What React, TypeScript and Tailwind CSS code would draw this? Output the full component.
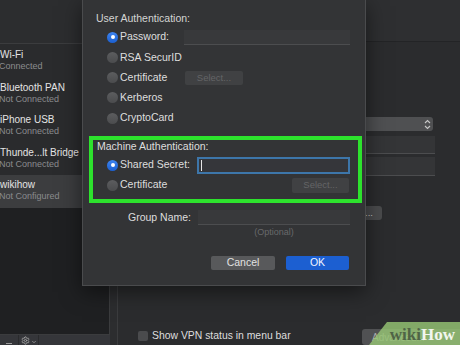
import { Settings, ChevronDown } from "lucide-react";

const networks = [
  { name: "Wi-Fi", status: "Connected" },
  { name: "Bluetooth PAN", status: "Not Connected" },
  { name: "iPhone USB", status: "Not Connected" },
  { name: "Thunde...lt Bridge", status: "Not Connected" },
  { name: "wikihow", status: "Not Configured", selected: true },
];

function Radio({ on = false }: { on?: boolean }) {
  if (on)
    return (
      <span className="w-[11px] h-[11px] rounded-full bg-gradient-to-b from-[#3d84f0] to-[#1b5fd0] flex items-center justify-center shrink-0">
        <span className="w-[4px] h-[4px] rounded-full bg-white" />
      </span>
    );
  return (
    <span className="w-[11px] h-[11px] rounded-full bg-gradient-to-b from-[#5c5d5f] to-[#4b4c4e] shrink-0" />
  );
}

function Field({ className = "" }: { className?: string }) {
  return (
    <div
      className={`bg-[#38393b] border-b border-[#4c4d4f] ${className}`}
    />
  );
}

function SelectButton({ className = "" }: { className?: string }) {
  return (
    <div
      className={`bg-[#404143] rounded-[2px] text-[9.5px] text-[#646567] flex items-center justify-center ${className}`}
    >
      Select...
    </div>
  );
}

export default function App() {
  return (
    <div className="relative w-[460px] h-[345px] overflow-hidden bg-[#2c2d2f] flex font-['Liberation_Sans',Arial,sans-serif] text-[10px]">
      {/* SIDEBAR */}
      <aside className="w-[110px] flex flex-col shrink-0">
        <div className="h-[43px]" />
        <div className="flex-1 flex flex-col border-t border-r border-b border-[#3b3c3e]">
          <div className="bg-[#2a2b2d] pt-[1px]">
            {networks.map((n) => (
              <div
                key={n.name}
                className={`h-[32.5px] pt-[4px] whitespace-nowrap ${n.selected ? "bg-[#3c3d3f]" : ""}`}
              >
                <div className="text-[10px] leading-[12px] text-[#e4e4e4]">
                  {n.name}
                </div>
                <div className="text-[9px] leading-[11px] text-[#8a8b8d] -ml-[1px]">
                  {n.status}
                </div>
              </div>
            ))}
          </div>
          <div className="flex-1 bg-[#1f2022]" />
        </div>
        <div className="h-[10px] flex bg-[#35363a]">
          <div className="w-[19px] flex justify-center border-r border-[#2a2b2d]">
            <span className="w-[6px] h-px bg-[#9a9a9a] mt-[8px]" />
          </div>
          <div className="w-[20px] flex items-start justify-center gap-[1px] pt-[1px] text-[#a0a0a0] border-r border-[#2a2b2d]">
            <Settings size={9} strokeWidth={2.5} />
            <ChevronDown size={6} strokeWidth={3} className="mt-[3px]" />
          </div>
        </div>
      </aside>

      {/* MAIN PANEL */}
      <main className="flex-1 ml-[7px] border-l border-[#3b3c3e] flex flex-col bg-[#2b2c2e] text-[#dcdcdc]">
        <div className="h-[42px] bg-[#2e2f31] border-b border-[#232426] shrink-0" />
        <div className="mt-[75px] flex justify-end pr-[27px]">
          <div className="w-[180px] h-[14px] bg-[#4f5052] rounded-[3px] flex items-center justify-end pr-[2px]">
            <svg width="7" height="11" viewBox="0 0 7 11" fill="none" stroke="#c8c8c8" strokeWidth="1.1">
              <path d="M1 4 L3.5 1.5 L6 4" />
              <path d="M1 7 L3.5 9.5 L6 7" />
            </svg>
          </div>
        </div>
        <div className="mt-[5px] flex justify-end pr-[25px]">
          <Field className="w-[180px] h-[18px] !bg-[#343537]" />
        </div>
        <div className="mt-[3px] flex justify-end pr-[25px]">
          <Field className="w-[180px] h-[19px] !bg-[#343537]" />
        </div>
        <div className="mt-[30px] ml-[130px]">
          <div className="w-[134px] h-[14px] bg-[#4a4b4d] rounded-[3px] flex items-center justify-end pr-[9px] text-[9.5px] text-[#c8c8c8] whitespace-nowrap">
            Authentication Settings...
          </div>
        </div>
        <div className="mt-auto h-[16px] flex items-center pl-[20px]">
          <span className="w-[10px] h-[10px] rounded-[2px] bg-[#4a4b4d] -mt-[2px]" />
          <span className="ml-[4px] text-[10.4px] leading-[12px] -mt-[2px] text-[#dedede]">
            Show VPN status in menu bar
          </span>
          <div className="ml-auto w-[98px] h-[16px] bg-[#505153] rounded-l-[3px] flex items-center pl-[10px] text-[10px] text-[#a9aaa9]">
            Advanced...
          </div>
        </div>
      </main>

      {/* SHEET DIALOG */}
      <div className="absolute left-[82px] top-0 w-[284px] h-[286px] bg-[#333436] border-x border-b border-[#4a4b4d] shadow-[0_6px_20px_rgba(0,0,0,0.5)] flex flex-col text-[10.5px] text-[#dedede]">
        <div className="ml-[13px] mt-[11px] leading-[14px] text-[#d4d4d4]">
          User Authentication:
        </div>
        <div className="ml-[24px] mt-[2px] flex flex-col">
          <div className="h-[20.25px] flex items-center">
            <div className="w-[77px] flex items-center gap-[2px]">
              <Radio on />
              <span>Password:</span>
            </div>
            <Field className="w-[166px] h-[15px]" />
          </div>
          <div className="h-[20.25px] flex items-center gap-[2px]">
            <Radio />
            <span>RSA SecurID</span>
          </div>
          <div className="h-[20.25px] flex items-center">
            <div className="w-[78px] flex items-center gap-[2px]">
              <Radio />
              <span>Certificate</span>
            </div>
            <SelectButton className="w-[58px] h-[14px]" />
          </div>
          <div className="h-[20.25px] flex items-center gap-[2px]">
            <Radio />
            <span>Kerberos</span>
          </div>
          <div className="h-[20.25px] flex items-center gap-[2px]">
            <Radio />
            <span>CryptoCard</span>
          </div>
        </div>

        {/* highlighted box */}
        <div className="ml-[6px] mt-[8px] w-[273px] h-[67px] border-[4px] border-[#2de22d] shrink-0">
          <div className="ml-[4px] leading-[12px]">Machine Authentication:</div>
          <div className="ml-[14px] mt-[3px] w-[243px]">
            <div className="h-[20px] flex items-center">
              <div className="w-[90px] flex items-center gap-[2px]">
                <Radio on />
                <span>Shared Secret:</span>
              </div>
              <div className="w-[153px] h-[17px] bg-[#35363a] border-[2px] border-[#3d76aa] flex items-center pl-[2px]">
                <span className="w-px h-[11px] bg-[#e6e6e6]" />
              </div>
            </div>
            <div className="h-[20px] flex items-center justify-between">
              <div className="flex items-center gap-[2px]">
                <Radio />
                <span>Certificate</span>
              </div>
              <SelectButton className="w-[57px] h-[15px] mr-[1px]" />
            </div>
          </div>
        </div>

        <div className="mt-[5px] h-[19px] flex items-center">
          <span className="w-[108px] text-right">Group Name:</span>
          <Field className="ml-[7px] w-[152px] h-[15px]" />
        </div>
        <div className="ml-[115px] w-[152px] text-center text-[9px] leading-[10px] text-[#68696b]">
          (Optional)
        </div>
        <div className="mt-[19px] flex justify-end gap-[11px] pr-[16px]">
          <div className="w-[64px] h-[14px] bg-[#58595b] rounded-[2px] flex items-center justify-center text-[#e2e2e2]">
            Cancel
          </div>
          <div className="w-[63px] h-[14px] bg-[#1c5fd1] rounded-[2px] flex items-center justify-center text-[#f2f5ff]">
            OK
          </div>
        </div>
      </div>

      {/* WATERMARK */}
      <div className="absolute right-0 bottom-0 w-[95px] h-[23px]">
        <svg width="95" height="23" viewBox="0 0 95 23" className="absolute inset-0">
          <polygon points="22,0 95,0 95,23 4,23" fill="rgba(150,196,116,0.82)" />
        </svg>
        <span className="absolute right-[5px] bottom-[2px] font-['Liberation_Serif',serif] font-bold text-[17px] leading-none">
          <span className="text-[#4f6446]">wiki</span>
          <span className="text-[#f2f6ee]">How</span>
        </span>
      </div>
    </div>
  );
}
